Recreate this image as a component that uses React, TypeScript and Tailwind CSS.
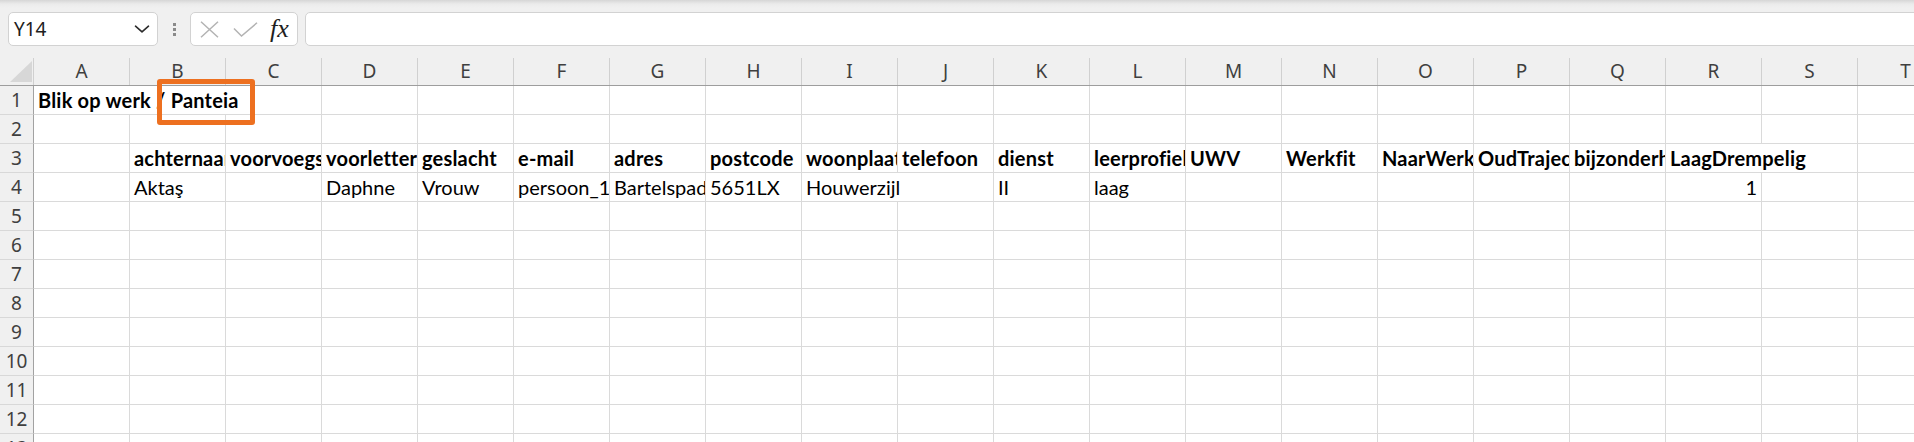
import React from "react";

const COLS = ["A", "B", "C", "D", "E", "F", "G", "H", "I", "J", "K", "L", "M", "N", "O", "P", "Q", "R", "S", "T"];
const ROW_COUNT = 13;

type Cell = {
  text: string;
  bold?: boolean;
  span?: number;
  right?: boolean;
};

// sheet contents keyed by row number and column letter
const sheet: Record<number, Record<string, Cell>> = {
  1: { A: { text: "Blik op werk / Panteia", bold: true, span: 3 } },
  3: {
    B: { text: "achternaam", bold: true },
    C: { text: "voorvoegsel", bold: true },
    D: { text: "voorletters", bold: true },
    E: { text: "geslacht", bold: true },
    F: { text: "e-mail", bold: true },
    G: { text: "adres", bold: true },
    H: { text: "postcode", bold: true },
    I: { text: "woonplaats", bold: true },
    J: { text: "telefoon", bold: true },
    K: { text: "dienst", bold: true },
    L: { text: "leerprofiel", bold: true },
    M: { text: "UWV", bold: true },
    N: { text: "Werkfit", bold: true },
    O: { text: "NaarWerk", bold: true },
    P: { text: "OudTraject", bold: true },
    Q: { text: "bijzonderheden", bold: true },
    R: { text: "LaagDrempelig", bold: true, span: 2 },
  },
  4: {
    B: { text: "Aktaş" },
    D: { text: "Daphne" },
    E: { text: "Vrouw" },
    F: { text: "persoon_1@voorbeeld.nl" },
    G: { text: "Bartelspad 12" },
    H: { text: "5651LX" },
    I: { text: "Houwerzijl", span: 2 },
    K: { text: "II" },
    L: { text: "laag" },
    R: { text: "1", right: true },
  },
};

const uiFont = { fontFamily: '"Noto Sans", "Open Sans", sans-serif' };
const cellFont = { fontFamily: 'Lato, "Liberation Sans", sans-serif' };

const Chevron = () => (
  <svg width="16" height="8" viewBox="0 0 16 8" fill="none">
    <path d="M1.5 1.2 L8 6.8 L14.5 1.2" stroke="#2b2b2b" strokeWidth="1.6" strokeLinecap="round" strokeLinejoin="round" />
  </svg>
);

const CancelIcon = () => (
  <svg width="19" height="17" viewBox="0 0 19 17" fill="none">
    <path d="M1 0.8 L18 16.2 M18 0.8 L1 16.2" stroke="#b3b3b3" strokeWidth="1.5" />
  </svg>
);

const EnterIcon = () => (
  <svg width="25" height="15" viewBox="0 0 25 15" fill="none">
    <path d="M1 6.5 L8.5 14 L24 0.8" stroke="#b3b3b3" strokeWidth="1.5" />
  </svg>
);

const Toolbar: React.FC = () => (
  <div
    className="flex h-[58px] items-start pl-[8px] pt-[12px] bg-[linear-gradient(to_bottom,#d6d6d6_0px,#ebebeb_4px,#f0f0f0_8px)]"
    style={uiFont}
  >
    <div className="flex h-[34px] w-[150px] shrink-0 items-center justify-between rounded-[5px] border border-[#d2d2d2] bg-white pl-[5px] pr-[7px]">
      <span className="text-[19px] leading-none text-[#202020]">Y14</span>
      <Chevron />
    </div>
    <div className="flex h-[34px] w-[32px] shrink-0 flex-col items-center justify-center gap-[2px]">
      <span className="h-[3px] w-[3px] bg-[#8a8a8a]" />
      <span className="h-[3px] w-[3px] bg-[#8a8a8a]" />
      <span className="h-[3px] w-[3px] bg-[#8a8a8a]" />
    </div>
    <div className="flex h-[34px] w-[108px] shrink-0 items-center rounded-[5px] border border-[#d2d2d2] bg-white pl-[9px]">
      <CancelIcon />
      <span className="ml-[14px] flex">
        <EnterIcon />
      </span>
      <span
        className="ml-[12px] text-[26px] italic leading-none text-[#1e1e1e]"
        style={{ fontFamily: '"Liberation Serif", "DejaVu Serif", serif' }}
      >
        fx
      </span>
    </div>
    <div className="ml-[7px] h-[34px] w-[1640px] shrink-0 rounded-[5px] border border-[#d2d2d2] bg-white" />
  </div>
);

const ColumnHeaders: React.FC = () => (
  <div className="flex h-[28px] border-b border-[#9d9d9d]" style={uiFont}>
    <div className="relative w-[34px] shrink-0 border-r border-[#d0d0d0]">
      <svg className="absolute left-[10px] top-[3px]" width="22" height="21" viewBox="0 0 22 21">
        <path d="M22 0 L22 21 L0 21 Z" fill="#d7d7d7" />
      </svg>
    </div>
    {COLS.map((c) => (
      <div
        key={c}
        className="flex w-[96px] shrink-0 items-center justify-center border-r border-[#d0d0d0] text-[19px] leading-none text-[#3f3f3f]"
      >
        {c}
      </div>
    ))}
  </div>
);

const SheetRow: React.FC<{ n: number }> = ({ n }) => {
  const data = sheet[n] ?? {};
  const cells: React.ReactNode[] = [];
  let i = 0;
  while (i < COLS.length) {
    const col = COLS[i];
    const cell = data[col];
    const span = cell?.span ?? 1;
    cells.push(
      <div
        key={col}
        className={
          "flex shrink-0 items-end overflow-hidden whitespace-nowrap border-r border-b border-[#dadada] px-[4px] pb-[3px] text-[20px] leading-[22px] text-black " +
          (cell?.bold ? "font-bold tracking-[0.2px] " : "") +
          (cell?.right ? "justify-end" : "justify-start")
        }
        style={{ width: span * 96, ...cellFont }}
      >
        {cell?.text ?? ""}
      </div>
    );
    i += span;
  }

  return (
    <div className="flex h-[29px]">
      <div
        className="flex w-[34px] shrink-0 items-center justify-center border-r border-b border-r-[#a2a2a2] border-b-[#d8d8d8] bg-[#f0f0f0] text-[19px] leading-none text-[#3f3f3f]"
        style={uiFont}
      >
        {n}
      </div>
      {cells}
    </div>
  );
};

export default function App() {
  const rowNumbers = Array.from({ length: ROW_COUNT }, (_, k) => k + 1);
  return (
    <div className="h-[442px] w-[1914px] overflow-hidden bg-[#f0f0f0]">
      <Toolbar />
      <ColumnHeaders />
      <div className="relative bg-white">
        {rowNumbers.map((n) => (
          <SheetRow key={n} n={n} />
        ))}
        {/* highlight frame around the Panteia label */}
        <div className="absolute left-[157px] top-[-7px] h-[46px] w-[98px] rounded-[3px] border-[5px] border-[#ed7020]" />
      </div>
    </div>
  );
}
